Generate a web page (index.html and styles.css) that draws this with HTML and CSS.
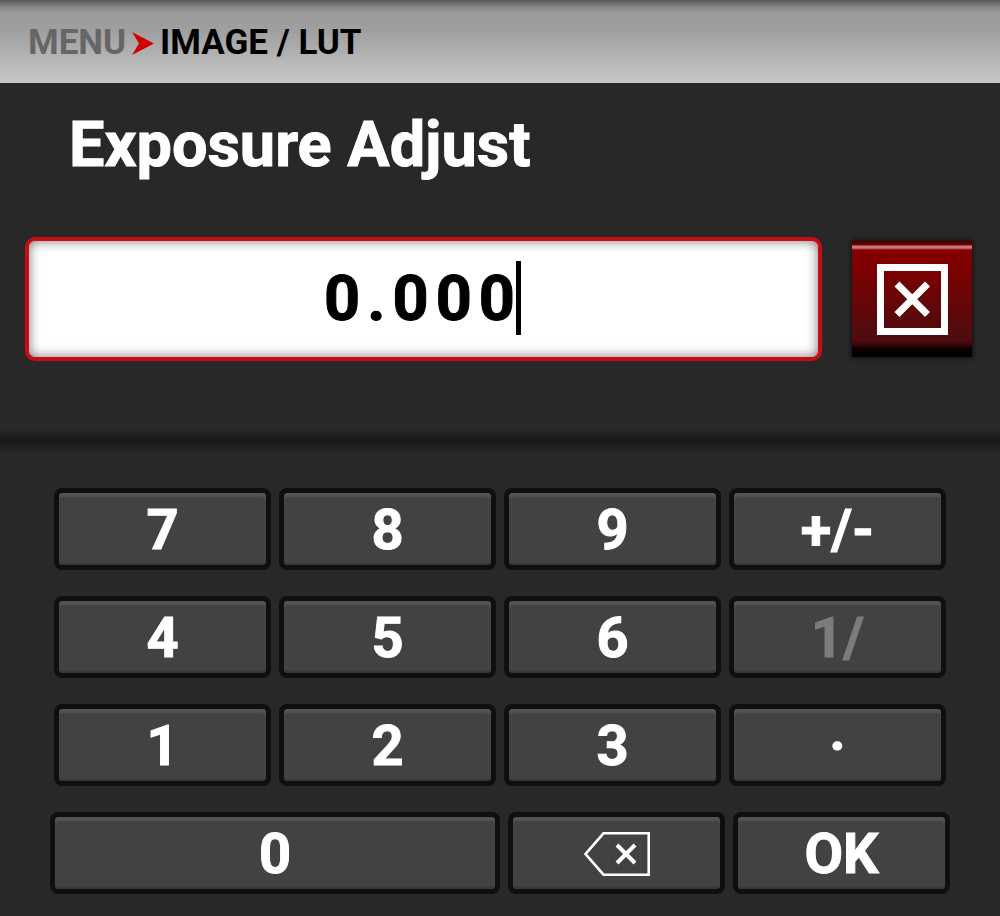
FILE: index.html
```html
<!DOCTYPE html>
<html lang="en">
<head>
<meta charset="utf-8">
<meta name="viewport" content="width=device-width, initial-scale=1">
<title>Exposure Adjust</title>
<link rel="stylesheet" href="styles.css">
</head>
<body>
<header class="topbar">
  <nav class="crumbs" aria-label="Breadcrumb">
    <a class="crumb-link" href="#menu">MENU</a>
    <svg class="crumb-arrow" viewBox="0 0 22 23" aria-hidden="true"><path d="M0 0 L22 11.5 L0 23 L7 11.5 Z"/></svg>
    <span class="crumb-current">IMAGE / LUT</span>
  </nav>
</header>
<main>
  <section class="entry">
    <label class="title" for="exposure">Exposure Adjust</label>
    <div class="entry-row">
      <div class="field">
        <input class="field-input" id="exposure" type="text" inputmode="decimal" size="5" value="0.000">
        <span class="caret"></span>
      </div>
      <button class="close" type="button" aria-label="Cancel">
        <svg class="close-icon" viewBox="0 0 71 71" aria-hidden="true"><rect x="3.5" y="3.5" width="64" height="64"/><path d="M20 20 L50.500 50.500 M50.500 20 L20 50.500"/></svg>
      </button>
    </div>
  </section>
  <section class="keypad" aria-label="Keypad">
    <div class="keys">
      <button class="key" type="button">7</button>
      <button class="key" type="button">8</button>
      <button class="key" type="button">9</button>
      <button class="key" type="button">+/-</button>
      <button class="key" type="button">4</button>
      <button class="key" type="button">5</button>
      <button class="key" type="button">6</button>
      <button class="key" type="button" disabled>1/</button>
      <button class="key" type="button">1</button>
      <button class="key" type="button">2</button>
      <button class="key" type="button">3</button>
      <button class="key" type="button" aria-label="Decimal point">·</button>
    </div>
    <div class="keys-bottom">
      <button class="key" type="button">0</button>
      <button class="key" type="button" aria-label="Backspace">
        <svg class="backspace-icon" viewBox="0 0 66 44" aria-hidden="true"><path class="outline" d="M19.500 1.300 H64.700 V42.700 H19.500 L1.600 22 Z"/><path class="cross" d="M33 13 L51 31 M51 13 L33 31"/></svg>
      </button>
      <button class="key" type="button">OK</button>
    </div>
  </section>
</main>
</body>
</html>
```
FILE: styles.css
```css
* {
  box-sizing: border-box;
}

body {
  margin: 0;
  min-height: 100vh;
  background: #282828;
  color: #fff;
  font-family: Roboto, "Liberation Sans", sans-serif;
  font-weight: 700;
}

.topbar {
  padding: 21px 28px 18px;
  background: linear-gradient(#585858, #808080 6px, #9b9b9b 13px, #a0a0a0 32px, #c8c8c8);
}

.crumbs {
  display: flex;
  align-items: center;
  gap: 6px;
  font-size: 35px;
  line-height: 44px;
}

.crumb-link {
  color: #666;
  text-decoration: none;
}

.crumb-arrow {
  width: 22px;
  height: 23px;
  fill: #d40000;
}

.crumb-current {
  color: #000;
}

.entry {
  padding: 24px 28px 80px 25px;
}

.title {
  display: block;
  padding-left: 44px;
  font-size: 63px;
  line-height: 76px;
  -webkit-text-stroke: 1px currentColor;
}

.entry-row {
  display: flex;
  align-items: center;
  gap: 30px;
  margin-top: 54px;
}

.field {
  display: flex;
  flex: 1;
  align-items: center;
  justify-content: center;
  min-width: 0;
  height: 124px;
  padding: 0 2px 2px 0;
  border: 4px solid #c50d12;
  border-radius: 10px;
  background: #fff;
  box-shadow: inset 0 0 12px #777;
}

.field-input {
  field-sizing: content;
  padding: 0;
  border: 0;
  outline: 0;
  background: none;
  color: #000;
  font: inherit;
  font-size: 63px;
  letter-spacing: 7px;
  -webkit-text-stroke: 1px currentColor;
}

.caret {
  width: 5px;
  height: 74px;
  margin-left: -6px;
  background: #000;
}

.close {
  display: grid;
  place-items: center;
  width: 120px;
  height: 116px;
  padding: 0;
  border: 0;
  background: linear-gradient(#400 0, #700 4px, #c77 5px, #c77 7px, #850000 9px, #800000 24px, #4c0c10 100px, #3c080a 103px, #100 107px, #000);
  box-shadow: 0 0 4px 1px #111;
}

.close-icon {
  width: 71px;
  height: 71px;
  fill: none;
  stroke: #fff;
  stroke-width: 7;
}

.keypad {
  padding: 47px 50px 20px;
  position: relative;
}

.keypad::before {
  content: "";
  position: absolute;
  inset: -12px 0 auto 0;
  height: 24px;
  background: linear-gradient(#282828, #191919 45%, #191919 55%, #282828);
}

.keys {
  display: grid;
  grid-template-columns: repeat(4, 1fr);
  gap: 26px 8px;
  padding: 0 4px;
}

.keys-bottom {
  display: grid;
  grid-template-columns: 27fr 13fr 13fr;
  gap: 8px;
  margin-top: 26px;
}

.key {
  display: grid;
  place-items: center;
  height: 82px;
  padding: 2px 0 0;
  border: 5px solid #0f0f0f;
  border-radius: 8px;
  background: #424242;
  box-shadow: inset 0 4px 2px #545454, inset 0 -2px 1px #383838;
  color: #fff;
  font: inherit;
  font-size: 56px;
  line-height: 70px;
  -webkit-text-stroke: 1px currentColor;
}

.key:disabled {
  color: #7c7c7c;
}

.backspace-icon {
  width: 66px;
  height: 44px;
  fill: none;
  stroke: #fff;
}

.outline {
  stroke-width: 2.6;
}

.cross {
  stroke-width: 4;
}
```
